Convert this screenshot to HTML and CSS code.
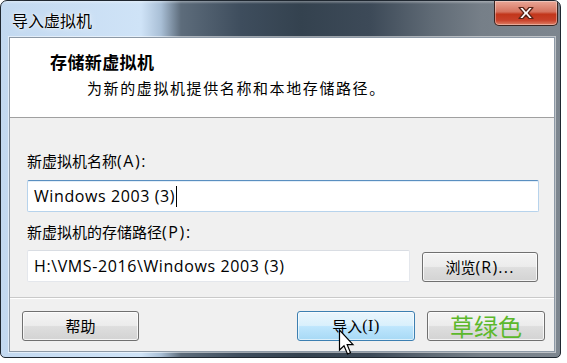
FILE: index.html
```html
<!DOCTYPE html>
<html lang="zh-CN">
<head>
<meta charset="utf-8">
<title>导入虚拟机</title>
<link rel="stylesheet" href="styles.css">
</head>
<body>
<div class="window">
  <div class="titlebar">
    <span class="title">导入虚拟机</span>
    <div class="close">
      <svg width="22" height="14" viewBox="0 0 22 14">
        <path d="M4 1.5 L8 1.5 L11 5 L14 1.5 L18 1.5 L13.2 7 L18 12.5 L14 12.5 L11 9 L8 12.5 L4 12.5 L8.8 7 Z" fill="#fff" stroke="#5a2418" stroke-width="1.2" stroke-linejoin="round"/>
      </svg>
    </div>
  </div>
  <div class="client">
    <div class="header">
      <div class="h-title">存储新虚拟机</div>
      <div class="h-sub">为新的虚拟机提供名称和本地存储路径。</div>
    </div>
    <div class="body">
      <div class="label">新虚拟机名称<span class="lat">(A):</span></div>
      <div class="input focused"><span>Windows 2003 (3)</span><span class="caret"></span></div>
      <div class="label label2">新虚拟机的存储路径<span class="lat">(P):</span></div>
      <div class="row">
        <div class="input path"><span>H:\VMS-2016\Windows 2003 (3)</span></div>
        <div class="btn browse">浏览<span class="lat">(R)...</span></div>
      </div>
    </div>
    <div class="footer">
      <div class="btn">帮助</div>
      <div class="spacer"></div>
      <div class="btn hover">导入<span class="serif">(I)</span></div>
      <div class="btn green">草绿色</div>
    </div>
  </div>
  <svg class="cursor" width="17" height="28" viewBox="0 0 17 28">
    <path d="M1.5 1 L1.5 21 L6 16.8 L9.5 25 L12.5 23.7 L9.2 15.7 L15 15.7 Z" fill="#fff" stroke="#000" stroke-width="1.2" stroke-linejoin="miter"/>
  </svg>
</div>
</body>
</html>
```

FILE: styles.css
```css
* { box-sizing: border-box; }
html, body { margin: 0; padding: 0; background: #ffffff; }
body {
  font-family: "Noto Sans CJK SC", "Noto Sans", sans-serif;
  color: #000;
}
.window {
  position: relative;
  width: 561px;
  height: 358px;
  border: 1px solid #1f2730;
  border-radius: 7px 7px 5px 5px;
  background:
    linear-gradient(180deg, rgba(255,255,255,0.35) 0, rgba(255,255,255,0) 3px),
    linear-gradient(90deg, #c3d9f0 0, #cfe3f7 140px, #a9bfd6 160px, #5d6c7b 180px, #3e4d5d 240px, #34424f 300px, #3d4a58 370px, #5f6a75 430px, #767f88 480px, #7d868f 561px);
  display: flex;
  flex-direction: column;
  overflow: hidden;
}
.titlebar {
  height: 36px;
  flex: none;
  display: flex;
  align-items: flex-start;
}
.title {
  font-size: 16px;
  line-height: 20px;
  padding: 9px 0 0 11px;
  color: #000;
  text-shadow: 0 0 6px rgba(255,255,255,0.9), 0 0 2px #fff;
}
.close {
  margin-left: auto;
  margin-right: 2px;
  width: 64px;
  height: 25px;
  border: 1px solid #3b2420;
  border-top: none;
  border-radius: 0 0 5px 5px;
  background: linear-gradient(180deg, #eaa797 0, #d5735f 45%, #c2361b 55%, #c8412a 80%, #de8167 100%);
  box-shadow: inset 0 0 0 1px rgba(255,255,255,0.35);
  display: flex;
  align-items: center;
  justify-content: center;
}
.client {
  flex: none;
  margin-left: 8px;
  width: 546px;
  height: 315px;
  border: 1px solid #8d99a6;
  box-shadow: 0 0 0 1px rgba(255,255,255,0.5);
  background: #f0f0f0;
  display: flex;
  flex-direction: column;
}
.header {
  height: 80px;
  flex: none;
  background: #ffffff;
  border-bottom: 1px solid #a0a0a0;
  padding: 14px 0 0 40px;
}
.h-title {
  font-size: 17px;
  font-weight: bold;
  line-height: 20px;
  letter-spacing: 0.4px;
}
.h-sub {
  font-size: 15px;
  line-height: 20px;
  margin-top: 6px;
  padding-left: 37px;
  letter-spacing: 1.6px;
}
.body {
  height: 179px;
  flex: none;
  padding: 33px 15px 0 17px;
}
.label {
  font-size: 15px;
  line-height: 20px;
}
.lat {
  font-family: "Open Sans", "Noto Sans", sans-serif;
  font-size: 16px;
  letter-spacing: 1.6px;
}
.serif {
  font-family: "Liberation Serif", serif;
  font-size: 16px;
  letter-spacing: 0.5px;
}
.label2 { margin-top: 10px; }
.input {
  margin-top: 9px;
  height: 32px;
  background: #fff;
  border: 1px solid #e2e3ea;
  border-top-color: #abadb3;
  border-radius: 2px;
  display: flex;
  align-items: center;
  padding-left: 6px;
  font-size: 16px;
  letter-spacing: 0.6px;
  font-family: "Open Sans", "Noto Sans CJK SC", sans-serif;
}
.input.focused {
  border-color: #b7d3ec;
  border-top-color: #5a8fc0;
  box-shadow: inset 0 1px 0 #e3eef8;
}
.caret {
  display: inline-block;
  width: 1px;
  height: 21px;
  background: #000;
  margin-left: 1px;
}
.row {
  display: flex;
  align-items: flex-start;
  margin-top: 8px;
}
.input.path {
  margin-top: 0;
  width: 383px;
  border-color: #e4e7ec;
  border-top-color: #d9dde3;
}
.btn {
  height: 30px;
  border: 1px solid #707070;
  border-radius: 3px;
  background: linear-gradient(180deg, #f4f4f4 0, #ececec 48%, #dedede 52%, #d3d3d3 100%);
  box-shadow: inset 0 0 0 1px rgba(255,255,255,0.75);
  display: flex;
  align-items: center;
  justify-content: center;
  font-size: 15px;
  line-height: 20px;
  width: 118px;
}
.browse {
  margin-left: 12px;
  margin-top: 2px;
  width: 116px;
}
.browse .lat { letter-spacing: 1.2px; }
.footer {
  flex: 1;
  border-top: 1px solid #c9c9c9;
  box-shadow: inset 0 1px 0 #ffffff;
  padding: 13px 9px 0 12px;
  display: flex;
  align-items: flex-start;
  gap: 12px;
}
.footer .btn:first-child { width: 117px; }
.spacer { flex: 1; }
.btn.hover {
  border-color: #3c7fb1;
  background: linear-gradient(180deg, #eaf6fd 0, #d9f0fc 48%, #bee6fd 52%, #a7d9f5 100%);
  box-shadow: inset 0 0 0 1px rgba(255,255,255,0.6);
}
.btn.green {
  color: #5cb82c;
  font-size: 24px;
  line-height: 26px;
}
.cursor {
  position: absolute;
  left: 337px;
  top: 328px;
}
```
